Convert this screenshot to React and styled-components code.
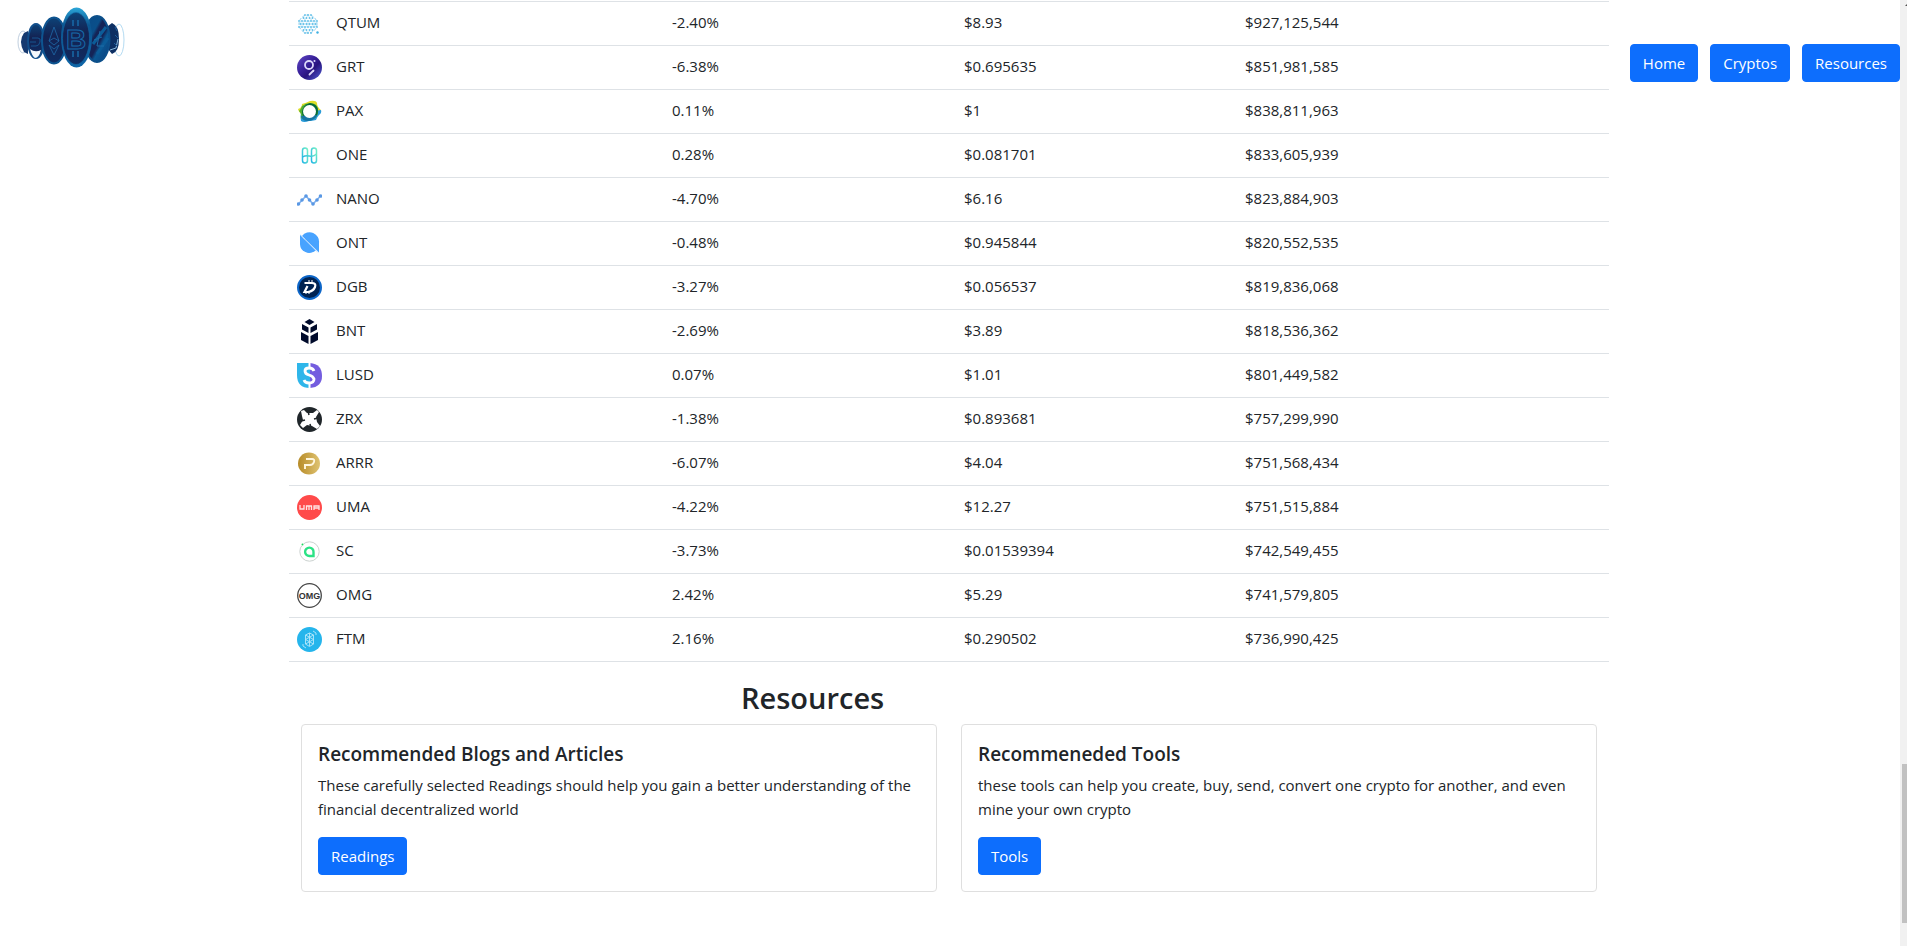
import React from "react";
import styled, { createGlobalStyle } from "styled-components";

const GlobalStyle = createGlobalStyle`
  *, *::before, *::after { box-sizing: border-box; }
  body {
    margin: 0;
    background: #fff;
    color: #212529;
    font-family: "Segoe UI", "Open Sans", "Noto Sans", sans-serif;
    font-size: 15px;
    line-height: 24px;
  }
`;

const Page = styled.div`
  display: grid;
  grid-template-columns: 1fr minmax(0, 1320px) 291px 7px;
  min-height: 100vh;
`;

const Brand = styled.header`
  svg { display: block; }
`;

const Main = styled.main`
  padding-top: 1px;
`;

const CoinTable = styled.table`
  width: 100%;
  table-layout: fixed;
  border-spacing: 0;
  border-top: 1px solid #dee2e6;
  margin-bottom: 16px;
`;

const Col = styled.col`
  width: ${(p) => p.$width};
`;

const Row = styled.tr`
  height: 44px;
`;

const Cell = styled.td`
  padding: 8px;
  border-bottom: 1px solid #dee2e6;
  vertical-align: top;
  text-align: left;
  font-weight: 400;
`;

const IconCell = styled(Cell)`
  padding: 9px 0 8px 8px;
  svg { display: block; }
`;

const SectionTitle = styled.h2`
  margin: 0 0 6px;
  padding-left: 452px;
  font-size: 29px;
  font-weight: 600;
  line-height: 40px;
`;

const Cards = styled.div`
  display: grid;
  grid-template-columns: 1fr 1fr;
  gap: 24px;
  padding: 0 12px;
`;

const Card = styled.article`
  padding: 16px;
  border: 1px solid #dfdfdf;
  border-radius: 4px;
`;

const CardTitle = styled.h5`
  margin: 0 0 6px;
  font-size: 19px;
  font-weight: 600;
  line-height: 26px;
`;

const CardText = styled.p`
  margin: 0 0 16px;
`;

const Button = styled.button`
  display: block;
  height: 38px;
  padding: 6px 12px;
  border: 1px solid #0d6efd;
  border-radius: 4px;
  background: #0d6efd;
  color: #fff;
  font: inherit;
  cursor: pointer;
`;

const Nav = styled.nav`
  display: flex;
  justify-content: flex-end;
  align-items: flex-start;
  gap: 12px;
  padding-top: 44px;
`;

const ScrollTrack = styled.aside`
  display: flex;
  flex-direction: column;
  justify-content: space-between;
  align-items: flex-end;
  height: 100vh;
  padding: 4px 0 23px;
  background: #f1f1f1;
  svg { display: block; }
`;

const ScrollThumb = styled.div`
  width: 5px;
  height: 159px;
  background: #c1c1c1;
`;

const Logo = () => (
  <svg width="150" height="80" viewBox="0 0 150 80" role="img" aria-label="Crypto coins">
    <defs>
      <linearGradient id="rim" x1="0" y1="0" x2="0" y2="1">
        <stop offset="0" stopColor="#2ba6d8" />
        <stop offset="0.3" stopColor="#0b5590" />
        <stop offset="1" stopColor="#0f66a8" />
      </linearGradient>
      <linearGradient id="face" x1="0" y1="0" x2="0" y2="1">
        <stop offset="0" stopColor="#0d4378" />
        <stop offset="0.4" stopColor="#132252" />
        <stop offset="1" stopColor="#0f2c62" />
      </linearGradient>
      <linearGradient id="stripe" x1="0" y1="0" x2="1" y2="1">
        <stop offset="0" stopColor="#0a4a87" />
        <stop offset="0.35" stopColor="#0a4f8a" />
        <stop offset="0.42" stopColor="#142457" />
        <stop offset="0.58" stopColor="#142457" />
        <stop offset="0.66" stopColor="#0b5894" />
        <stop offset="1" stopColor="#0c3b78" />
      </linearGradient>
    </defs>
    <ellipse cx="23" cy="42" rx="5" ry="11" fill="#fff" stroke="#c0cfdf" />
    <path d="M24 33q-6 8 0 19l4 2V31z" fill="#163a70" />
    <ellipse cx="119" cy="40" rx="5" ry="16" fill="none" stroke="#b4dbf2" />
    <path d="M112 23q7 3 7 16t-7 15l-4-5V26z" fill="#0d2f63" />
    <path d="M110 50l6-2 2-9" fill="none" stroke="#8ab9dd" />
    <path d="M115 27l2 4m-2 4l3 3m-4 5l3 3" stroke="#1c5c9c" />
    <ellipse cx="36" cy="41" rx="8" ry="17" fill="url(#face)" stroke="#124f8c" strokeWidth="2" />
    <path d="M32 38h6q3 0 2 4t-4 4h-5M30 42h6" fill="none" stroke="#17548f" />
    <path d="M30 49q5 4 11 1-2 8-6 8-3-2-5-9z" fill="#f3f8fc" />
    <ellipse cx="97" cy="39" rx="12.500" ry="23" fill="url(#stripe)" stroke="#0c4f8a" strokeWidth="2" />
    <path d="M106 27L93 44m15-6L97 54" stroke="#0c5c98" strokeWidth="3" />
    <path d="M100 31l-3 15h7m-10-6l8-3" fill="none" stroke="#1f6ba6" />
    <ellipse cx="54" cy="40.500" rx="12" ry="23" fill="url(#face)" stroke="#0e5490" strokeWidth="2" />
    <path d="M54 27l5 14-5 4-5-4zM49 45l5 4 5-4-5 10zM49 41l5-3 5 3" fill="none" stroke="#2069a8" strokeWidth="0.800" />
    <ellipse cx="76.500" cy="37.500" rx="15.500" ry="30" fill="url(#rim)" />
    <ellipse cx="76" cy="38.500" rx="13.500" ry="26" fill="url(#face)" stroke="#1169a6" strokeWidth="0.600" />
    <path d="M73 20v6m5-6v6m-5 25v6m5-6v6" stroke="#176aa8" strokeWidth="1.500" />
    <text x="76" y="48.500" textAnchor="middle" fontFamily="Liberation Sans" fontWeight="700" fontSize="28" fill="#13295c" stroke="#176aa8">B</text>
  </svg>
);

const dots = [];
for (let r = 0; r < 7; r++) {
  for (let c = 0; c < 7; c++) {
    const x = 2 + c * 3 + (r % 2 ? 1.5 : 0);
    const y = 4 + r * 3;
    if (Math.hypot(x - 11, y - 13) < 9.6) dots.push([x, y]);
  }
}

const glyphs = {
  QTUM: (
    <>
      <circle cx="11" cy="13" r="9" fill="none" stroke="#8fd0ee" strokeDasharray="3 1.5" />
      <path d="M3 10h16M2 13h18M3 16h16M6 6l10 14M16 6L6 20M11 4L3 16M11 4l8 12M3 10l8 12M19 10l-8 12" stroke="#b8e2f5" strokeWidth="0.700" />
      {dots.map(([x, y]) => <circle key={`${x}-${y}`} cx={x} cy={y} r="0.900" fill="#62bfe8" />)}
      <circle cx="20.500" cy="21.500" r="1.200" fill="#3fb0e2" />
    </>
  ),
  GRT: (
    <>
      <defs>
        <linearGradient id="grt" x1="0" y1="0" x2="1" y2="1">
          <stop offset="0" stopColor="#6249c5" />
          <stop offset="0.400" stopColor="#39219b" />
          <stop offset="0.600" stopColor="#29147f" />
          <stop offset="1" stopColor="#5262d9" />
        </linearGradient>
      </defs>
      <circle cx="12.500" cy="12.500" r="12.500" fill="url(#grt)" />
      <circle cx="12" cy="10" r="4" fill="none" stroke="#dcd8fa" strokeWidth="1.800" />
      <path d="M16.500 15.500l-4 4" stroke="#dcd8fa" strokeWidth="1.800" strokeLinecap="round" />
      <circle cx="17.500" cy="6" r="1" fill="#dcd8fa" />
    </>
  ),
  PAX: (
    <>
      <path d="M5 5q4-1 8-3 6-1 7 2 0 4 4 7-10 9-18 5-4-2-5-6 4-1 4-5z" fill="#dede28" />
      <path d="M24 11q1 3-2 5-2 2-3 5-4 1-7 1-5 2-8 0-1-4 0-8z" fill="#2a9bd8" />
      <path d="M5 7q4-3 8-3 7 0 8 6 1 8-6 10-7 2-11-1 1-4-2-7 2-2 3-5z" fill="#4fae35" />
      <path d="M13 4q8 1 8 8t-8 9q-8-1-8-8 1-7 8-9z" fill="#076b3b" />
      <path d="M20 16q-3 6-9 6-6 0-7-5z" fill="#1675a4" />
      <circle cx="12.500" cy="12.500" r="6.500" fill="#fff" />
    </>
  ),
  ONE: (
    <>
      <defs>
        <linearGradient id="one" x1="0" y1="1" x2="1" y2="0">
          <stop offset="0" stopColor="#20b5e5" />
          <stop offset="1" stopColor="#76f1c5" />
        </linearGradient>
      </defs>
      <g fill="none" stroke="url(#one)" strokeWidth="1.500">
        <rect x="5.500" y="5" width="5" height="15" rx="2.500" />
        <rect x="14.500" y="5" width="5" height="15" rx="2.500" />
        <path d="M5.500 14q3-2 7-1t7-2" />
      </g>
    </>
  ),
  NANO: (
    <>
      <path d="M1.500 17L9 9l7 8 7.500-8" fill="none" stroke="#7fb1ee" strokeWidth="1.600" />
      {[[1.5, 17], [5, 13], [9, 9], [12.500, 13], [16, 17], [20, 13], [23.500, 9]].map(([x, y]) => (
        <circle key={x} cx={x} cy={y} r="1.800" fill="#5a98e4" />
      ))}
    </>
  ),
  ONT: (
    <>
      <path d="M3 3.500V13a9 9 0 0 0 15 6.500z" fill="#48a3ff" />
      <path d="M5 5a9.500 9.500 0 0 1 17 7v9.500z" fill="#48a3ff" />
      <path d="M3.500 13q1 8.500 9.500 8.500 3.500 0 6-2L8 8z" fill="#48a3ff" />
      <path d="M3.500 4L21 21.500" stroke="#c5e1ff" strokeWidth="0.900" />
    </>
  ),
  DGB: (
    <>
      <circle cx="12.500" cy="12.500" r="11.500" fill="#002352" stroke="#0d66c8" strokeWidth="2" />
      <path d="M7.500 8h7q5 0 3.500 4t-7 5H7.500l3-6" fill="none" stroke="#fff" strokeWidth="2.200" />
      <path d="M12 5v3m3-3v3M9 17v2m3-2v2" stroke="#fff" />
    </>
  ),
  BNT: (
    <g fill="#000b2b">
      <path d="M12.500 0l5 3-5 3-5-3z" />
      <path d="M5 5l6.500 3.500V14L5 10.500zM20 5l-6.500 3.500V14l6.500-3.500z" />
      <path d="M4 13l7.500 4v8L4 21zM21 13l-7.500 4v8l7.500-4z" />
    </g>
  ),
  LUSD: (
    <>
      <path d="M0 0h13v25Q0 25 0 12z" fill="#2eb6ea" />
      <path d="M13 0q12 1 12 13 0 11-12 12z" fill="#745ddf" />
      <path d="M17 8q-1-3-5-3t-4 3q0 3 4 4t5 4q0 4-5 4-4 0-5-3" fill="none" stroke="#fff" strokeWidth="2.800" />
      <path d="M12.500 0v5M12.500 20v5" stroke="#fff" strokeWidth="2" />
    </>
  ),
  ZRX: (
    <>
      <circle cx="12.500" cy="12.500" r="12.500" fill="#20262a" />
      <path d="M4 4l3-1 3 3 6 0 4-3 2 2-3 5 1 5 3 4-3 3-5-3-5-1-4 3-3-3 3-5-1-4z" fill="#fff" />
      <path d="M11 4l1 4M21 11l-4 1M14 21l-1-4M4 14l4-1" stroke="#20262a" strokeWidth="1.500" />
    </>
  ),
  ARRR: (
    <>
      <defs>
        <linearGradient id="arrr">
          <stop offset="0" stopColor="#b78b27" />
          <stop offset="1" stopColor="#dfc372" />
        </linearGradient>
      </defs>
      <circle cx="12" cy="12.500" r="11" fill="url(#arrr)" />
      <path d="M9 8h6q3 0 2 3t-4 3H7M8 14v4" fill="none" stroke="#fff6dd" strokeWidth="1.900" />
    </>
  ),
  UMA: (
    <>
      <circle cx="12.500" cy="12.500" r="12.500" fill="#ff4a4a" />
      <path d="M3 10v4h4v-4M9.500 15v-4h5v4M12 11v4M17 15v-4h5v4M17 13h5" fill="none" stroke="#ffe3e3" strokeWidth="1.300" />
    </>
  ),
  SC: (
    <>
      <circle cx="12.500" cy="12.500" r="9.700" fill="#fff" stroke="#cbd2d0" />
      <circle cx="5.500" cy="5.500" r="1.600" fill="#fff" />
      <circle cx="5.500" cy="5.500" r="1" fill="#1ed660" />
      <path d="M16.500 17H12.500a4.200 4.200 0 1 1 4-4z" fill="none" stroke="#2be285" strokeWidth="2.400" />
    </>
  ),
  OMG: (
    <>
      <circle cx="12.500" cy="12.500" r="11.800" fill="#fff" stroke="#454545" strokeWidth="1.300" />
      <text x="12.500" y="15.500" textAnchor="middle" fontFamily="Liberation Sans" fontWeight="700" fontSize="9" fill="#333">OMG</text>
    </>
  ),
  FTM: (
    <>
      <circle cx="12.500" cy="12.500" r="12.500" fill="#25b5ec" />
      <path d="M8.500 8l4-2 4 2v9l-4 2.500-4-2.500zM8.500 8l8 4.500-8 4.500M16.500 8l-8 4.500 8 4.500M12.500 6v13M6 17v2l3 2M19 8V6l-3-2" fill="none" stroke="#b5e8fb" strokeWidth="0.900" />
    </>
  ),
};

const coins = [
  ["QTUM", "-2.40%", "$8.93", "$927,125,544"],
  ["GRT", "-6.38%", "$0.695635", "$851,981,585"],
  ["PAX", "0.11%", "$1", "$838,811,963"],
  ["ONE", "0.28%", "$0.081701", "$833,605,939"],
  ["NANO", "-4.70%", "$6.16", "$823,884,903"],
  ["ONT", "-0.48%", "$0.945844", "$820,552,535"],
  ["DGB", "-3.27%", "$0.056537", "$819,836,068"],
  ["BNT", "-2.69%", "$3.89", "$818,536,362"],
  ["LUSD", "0.07%", "$1.01", "$801,449,582"],
  ["ZRX", "-1.38%", "$0.893681", "$757,299,990"],
  ["ARRR", "-6.07%", "$4.04", "$751,568,434"],
  ["UMA", "-4.22%", "$12.27", "$751,515,884"],
  ["SC", "-3.73%", "$0.01539394", "$742,549,455"],
  ["OMG", "2.42%", "$5.29", "$741,579,805"],
  ["FTM", "2.16%", "$0.290502", "$736,990,425"],
];

const resources = [
  {
    title: "Recommended Blogs and Articles",
    text: "These carefully selected Readings should help you gain a better understanding of the financial decentralized world",
    action: "Readings",
  },
  {
    title: "Recommeneded Tools",
    text: "these tools can help you create, buy, send, convert one crypto for another, and even mine your own crypto",
    action: "Tools",
  },
];

export default function App() {
  return (
    <>
      <GlobalStyle />
      <Page>
        <Brand><Logo /></Brand>
        <Main>
          <CoinTable>
            <colgroup>
              <Col $width="39px" />
              <Col $width="336px" />
              <Col $width="292px" />
              <Col $width="281px" />
              <Col $width="auto" />
            </colgroup>
            <tbody>
              {coins.map(([symbol, change, price, cap]) => (
                <Row key={symbol}>
                  <IconCell>
                    <svg width="25" height="25" viewBox="0 0 25 25" aria-hidden="true">{glyphs[symbol]}</svg>
                  </IconCell>
                  <Cell as="th" scope="row">{symbol}</Cell>
                  <Cell>{change}</Cell>
                  <Cell>{price}</Cell>
                  <Cell>{cap}</Cell>
                </Row>
              ))}
            </tbody>
          </CoinTable>
          <SectionTitle>Resources</SectionTitle>
          <Cards>
            {resources.map((item) => (
              <Card key={item.action}>
                <CardTitle>{item.title}</CardTitle>
                <CardText>{item.text}</CardText>
                <Button type="button">{item.action}</Button>
              </Card>
            ))}
          </Cards>
        </Main>
        <Nav aria-label="Main">
          <Button type="button">Home</Button>
          <Button type="button">Cryptos</Button>
          <Button type="button">Resources</Button>
        </Nav>
        <ScrollTrack aria-hidden="true">
          <svg width="2" height="2" viewBox="0 0 2 2"><path d="M0 2L2 0v2z" fill="#505050" /></svg>
          <ScrollThumb />
        </ScrollTrack>
      </Page>
    </>
  );
}
